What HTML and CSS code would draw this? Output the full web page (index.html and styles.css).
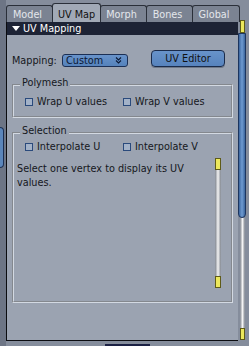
FILE: index.html
```html
<!DOCTYPE html>
<html lang="en">
<head>
    <meta charset="UTF-8">
    <meta name="viewport" content="width=device-width, initial-scale=1.0">
    <title>UV Map</title>
    <link rel="stylesheet" href="styles.css">
</head>
<body>
    <div class="app">
        <div class="main">
            <!-- Property tabs -->
            <div class="tabs">
                <div class="tab">Model</div>
                <div class="tab active">UV Map</div>
                <div class="tab">Morph</div>
                <div class="tab">Bones</div>
                <div class="tab">Global</div>
            </div>

            <div class="panel">
                <div class="section-header"><span class="arrow"></span>UV Mapping</div>

                <div class="mapping-row">
                    <span class="label">Mapping:</span>
                    <div class="dropdown">
                        <span>Custom</span>
                        <svg class="chevron" width="7" height="7" viewBox="0 0 7 7">
                            <path d="M1 0.5 L3.5 3 L6 0.5 M1 3.5 L3.5 6 L6 3.5" fill="none" stroke="#0b1834" stroke-width="1.1"/>
                        </svg>
                    </div>
                    <button class="btn">UV Editor</button>
                </div>

                <fieldset class="group polymesh">
                    <legend>Polymesh</legend>
                    <div class="check-row">
                        <label class="check"><span class="box"></span>Wrap U values</label>
                        <label class="check"><span class="box"></span>Wrap V values</label>
                    </div>
                </fieldset>

                <fieldset class="group selection">
                    <legend>Selection</legend>
                    <div class="check-row">
                        <label class="check"><span class="box"></span>Interpolate U</label>
                        <label class="check"><span class="box"></span>Interpolate V</label>
                    </div>
                    <div class="info-row">
                        <p>Select one vertex to display its UV values.</p>
                        <div class="mini-scroll">
                            <span class="cap"></span>
                            <span class="track"></span>
                            <span class="cap"></span>
                        </div>
                    </div>
                </fieldset>
            </div>
        </div>

        <!-- Panel scrollbar -->
        <div class="scrollbar">
            <span class="cap"></span>
            <span class="thumb"></span>
            <span class="track"></span>
            <span class="cap"></span>
        </div>
    </div>

    <div class="side-tab"></div>
    <div class="dock-edge"></div>
</body>
</html>
```

FILE: styles.css
```css
/* General styles */
body {
    margin: 0;
    background: #858d9c;
    font-family: "DejaVu Sans", sans-serif;
    font-size: 9.7px;
    color: #15171c;
    overflow: hidden;
}

.app {
    display: flex;
    height: 346px;
    border-left: 6px solid #6d7585;
    box-sizing: border-box;
}

.main {
    width: 232px;
    display: flex;
    flex-direction: column;
    padding-bottom: 5px;
}

/* Tabs */
.tabs {
    display: flex;
    align-items: flex-end;
    width: 234px;
    height: 19px;
    margin-top: 3px;
    flex-shrink: 0;
    position: relative;
    z-index: 1;
}

.tab {
    box-sizing: border-box;
    width: 47px;
    height: 17px;
    margin-left: -1px;
    padding: 3px 4px 0 0;
    line-height: 12px;
    text-align: center;
    color: #e4e7ec;
    background: #7b8392;
    border: 1px solid #2a2f39;
    border-bottom: 0;
    border-radius: 3px 3px 0 0;
}

.tab:first-child {
    margin-left: 0;
}

.tab:nth-child(2) {
    width: 49px;
}

.tab:nth-child(5) {
    width: 48px;
}

.tab.active {
    height: 19px;
    padding: 5px 0 0;
    color: #111;
    background: #a1a9b6;
    position: relative;
    z-index: 1;
}

/* Panel */
.panel {
    flex: 1;
    background: #9ba3b1;
    border-left: 1px solid #0b0c10;
    border-bottom: 1px solid #0b0c10;
}

.section-header {
    display: flex;
    align-items: center;
    height: 13px;
    padding-left: 5px;
    line-height: 13px;
    color: #fff;
    background: #1d2335;
}

.arrow {
    width: 0;
    height: 0;
    margin-right: 3px;
    border-left: 4px solid transparent;
    border-right: 4px solid transparent;
    border-top: 5px solid #fff;
}

.mapping-row {
    display: flex;
    align-items: flex-end;
    height: 17px;
    margin-top: 15px;
    padding-left: 5px;
}

.label {
    width: 50px;
    line-height: 12px;
}

.dropdown {
    box-sizing: border-box;
    display: flex;
    align-items: center;
    justify-content: space-between;
    width: 66px;
    height: 13px;
    padding: 0 5px 0 3px;
    line-height: 11px;
    color: #0b1834;
    background: linear-gradient(#6893ca, #5582bb);
    border: 1px solid #1b2f55;
    border-radius: 3px;
}

.btn {
    box-sizing: border-box;
    width: 74px;
    height: 17px;
    margin-left: 23px;
    padding: 0;
    font: inherit;
    color: #111;
    background: linear-gradient(#6893ca, #5783bd);
    border: 1px solid #1a2b4b;
    border-radius: 4px;
    box-shadow: 0 1px 0 rgba(30, 40, 60, 0.35);
}

/* Groups */
.group {
    margin: 0 5px;
    padding: 0 0 8px 3px;
    border: 2px groove #d3d9e2;
    min-width: 0;
}

.group legend {
    margin-left: 3px;
    padding: 0 2px 4px;
    line-height: 12px;
}

.polymesh {
    margin-top: 10px;
}

.polymesh .check-row {
    margin-top: 3px;
}

.selection {
    margin-top: 7px;
    padding-bottom: 13px;
}

.check-row {
    display: flex;
    padding-left: 8px;
    line-height: 12px;
}

.check {
    display: flex;
    align-items: center;
    gap: 4px;
    width: 98px;
}

.box {
    box-sizing: border-box;
    width: 8px;
    height: 8px;
    background: #a3b2c8;
    border: 1px solid #2a4a7c;
}

.info-row {
    display: flex;
    margin-top: 5px;
}

.info-row p {
    flex: 1;
    margin: 4px 6px 0 0;
    line-height: 14px;
}

/* Scrollbars */
.mini-scroll {
    display: flex;
    flex-direction: column;
    width: 6px;
    height: 130px;
    margin-right: 10px;
}

.cap {
    box-sizing: border-box;
    height: 12px;
    background: #ece85c;
    border: 1px solid #5f5b18;
}

.track {
    flex: 1;
    background: linear-gradient(90deg, #7f858f, #f4f4f4 50%, #7f858f);
}

.scrollbar {
    display: flex;
    flex-direction: column;
    align-items: center;
    width: 8px;
    margin: 20px 0 6px;
}

.scrollbar .cap {
    width: 5px;
    height: 13px;
}

.scrollbar .cap:last-child {
    height: 12px;
}

.scrollbar .track {
    width: 5px;
}

.thumb {
    box-sizing: border-box;
    width: 8px;
    height: 185px;
    background: linear-gradient(90deg, #3b659d, #6f9bd1 50%, #3b659d);
    border: 1px solid #1c355f;
    border-radius: 0 0 4px 4px;
}

/* Bits of neighbouring windows */
.side-tab {
    position: absolute;
    left: 0;
    top: 127px;
    width: 4px;
    height: 41px;
    box-sizing: border-box;
    background: #5b86bb;
    border: 1px solid #1c2f52;
    border-left: 0;
    border-radius: 0 4px 4px 0;
}

.dock-edge {
    position: absolute;
    left: 105px;
    top: 344px;
    width: 45px;
    height: 2px;
    background: #1b2144;
}
```
